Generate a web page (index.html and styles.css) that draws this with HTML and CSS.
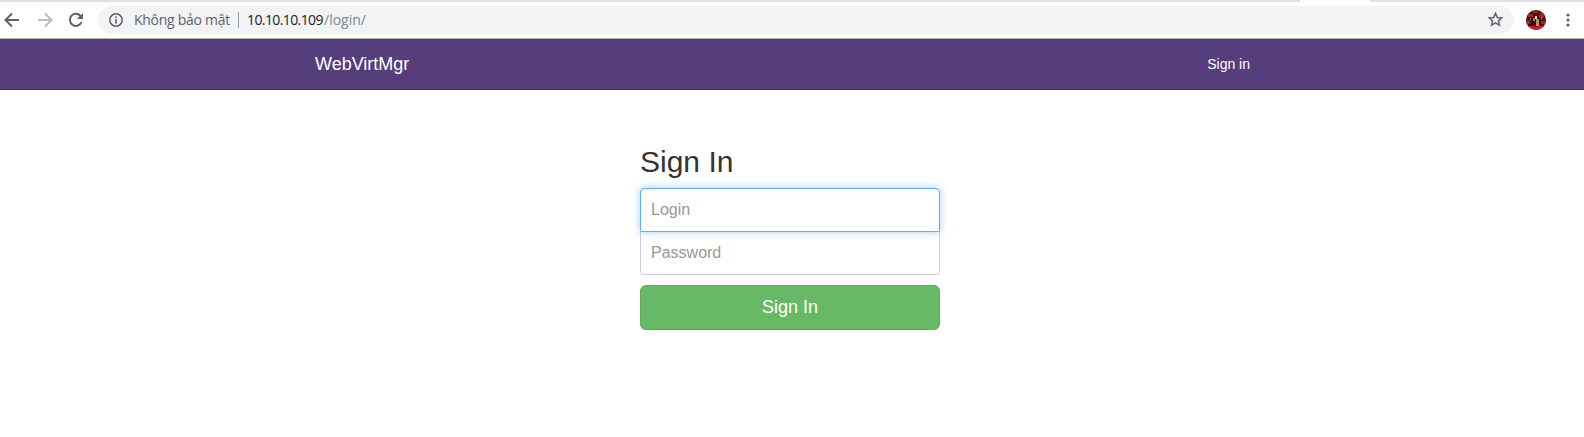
FILE: index.html
```html
<!DOCTYPE html>
<html lang="vi">
<head>
<meta charset="utf-8">
<title>WebVirtMgr</title>
<link rel="stylesheet" href="styles.css">
</head>
<body>
<div class="tabstrip"><span class="tab-gap"></span></div>
<div class="toolbar">
  <svg class="icon back" viewBox="0 0 16 16"><path d="M15 8H2M8 1.5 1.5 8 8 14.5"/></svg>
  <svg class="icon forward" viewBox="0 0 16 16"><path d="M1 8h13M8 1.5 14.5 8 8 14.5"/></svg>
  <svg class="icon reload" viewBox="0 0 16 16"><path d="M13.5 10A6 6 0 1 1 12.3 3.8L14 5.5"/><path class="solid" d="M15 1v6H9z"/></svg>
  <div class="omnibox">
    <svg class="icon info" viewBox="0 0 14 14"><circle cx="7" cy="7" r="6.2"/><path class="solid" d="M6.2 3.3h1.6v1.5H6.2zM6.2 6h1.6v4.7H6.2z"/></svg>
    <span class="security">Không bảo mật</span>
    <span class="divider"></span>
    <span class="host">10.10.10.109</span><span class="path">/login/</span>
    <svg class="icon star" viewBox="0 0 14 14"><path d="m7 1.2 1.7 3.9 4.2.4-3.2 2.8 1 4.1L7 10.2l-3.7 2.2 1-4.1-3.2-2.8 4.2-.4z"/></svg>
  </div>
  <svg class="avatar" viewBox="0 0 20 20">
    <defs><clipPath id="round"><circle cx="10" cy="10" r="10"/></clipPath></defs>
    <g clip-path="url(#round)">
      <path fill="#4a1015" d="M0 0h20v20H0z"/>
      <path fill="#a81f25" d="M2 4h5v3H2zM13 3h5v5h-5zM0 10h4v4H0zM15 11h5v3h-5zM7 1h5v2H7z"/>
      <path fill="#211012" d="M3 7h3v3H3zM14 8h3v3h-3zM5 12h3v3H5z"/>
      <path fill="#a9705e" d="M7 8h2v3H7zM4 8h1v2H4zM15 7h1v3h-1z"/>
      <path fill="#b89068" d="M10 9h3v7h-3z"/>
      <path fill="#e2cbbf" d="M9 6h2v3H9z"/>
      <path fill="#d41c34" d="M2 16h5l3 1 3-1h5v4H2z"/>
    </g>
  </svg>
  <svg class="menu" viewBox="0 0 4 14"><circle cx="2" cy="2" r="1.6"/><circle cx="2" cy="7" r="1.6"/><circle cx="2" cy="12" r="1.6"/></svg>
</div>
<nav class="navbar">
  <a class="brand">WebVirtMgr</a>
  <a class="nav-link">Sign in</a>
</nav>
<form class="form-signin">
  <h2 class="heading">Sign In</h2>
  <input class="field login" type="text" placeholder="Login">
  <input class="field password" type="password" placeholder="Password">
  <button class="submit" type="button">Sign In</button>
</form>
</body>
</html>
```
FILE: styles.css
```css
* { box-sizing: border-box; }
body {
  margin: 0;
  background: #fff;
  color: #333;
  font: 14px/20px "Liberation Sans", Arial, sans-serif;
  overflow: hidden;
}
.tabstrip {
  display: flex;
  height: 2px;
  padding-left: 1300px;
  background: #dee1e6;
}
.tab-gap { width: 70px; background: #fff; }
.toolbar {
  display: flex;
  align-items: center;
  height: 37px;
  padding: 0 14px 1px 4px;
  border-bottom: 1px solid #b3b3ad;
}
.icon {
  flex: none;
  width: 16px;
  height: 16px;
  fill: none;
  stroke: #5f6368;
  stroke-width: 2;
}
.icon .solid { fill: #5f6368; stroke: none; }
.forward { margin-left: 17px; stroke: #babcbe; }
.reload { margin-left: 15px; }
.omnibox {
  display: flex;
  align-items: center;
  width: 1416px;
  height: 28px;
  margin-left: 14px;
  padding: 0 11px 0 11px;
  border-radius: 14px;
  background: #f1f3f4;
  color: #5f6368;
  font: 14px/20px "Open Sans", "Noto Sans", sans-serif;
  white-space: nowrap;
}
.info { width: 14px; height: 14px; stroke-width: 1.5; }
.security { width: 96px; margin-left: 11px; letter-spacing: -0.27px; }
.divider { width: 1px; height: 16px; margin: 0 8px; background: #9aa0a6; }
.host { width: 77px; color: #202124; letter-spacing: -0.6px; }
.path { color: #80868b; }
.star { width: 15px; height: 15px; margin-left: auto; stroke-width: 1.4; }
.avatar { width: 20px; height: 20px; margin-left: 12px; }
.menu { width: 4px; height: 14px; margin-left: auto; fill: #5f6368; }
.navbar {
  display: flex;
  align-items: center;
  justify-content: space-between;
  height: 51px;
  padding: 0 334px 0 315px;
  border-bottom: 1px solid #432f62;
  background: #563d7c;
  color: #fff;
}
.brand { font-size: 18px; }
.form-signin {
  display: flex;
  flex-direction: column;
  width: 300px;
  margin: 55px 0 0 640px;
}
.heading { margin: 0 0 10px; font-size: 30px; font-weight: 500; line-height: 33px; }
.field {
  width: 100%;
  height: 44px;
  padding: 10px;
  border: 1px solid #ccc;
  background: #fff;
  font: 16px/22px "Liberation Sans", Arial, sans-serif;
  outline: none;
}
.field::placeholder { color: #999; opacity: 1; }
.login {
  position: relative;
  z-index: 1;
  border-color: #66afe9;
  border-radius: 4px 4px 0 0;
  box-shadow: inset 0 1px 1px rgba(0, 0, 0, .075), 0 0 8px rgba(102, 175, 233, .6);
}
.password { margin: -1px 0 10px; border-radius: 0 0 4px 4px; }
.submit {
  height: 45px;
  padding: 0 0 2px;
  border: 1px solid #5cae57;
  border-radius: 6px;
  background: #67b965;
  color: #fff;
  font: 18px/24px "Liberation Sans", Arial, sans-serif;
}
```
